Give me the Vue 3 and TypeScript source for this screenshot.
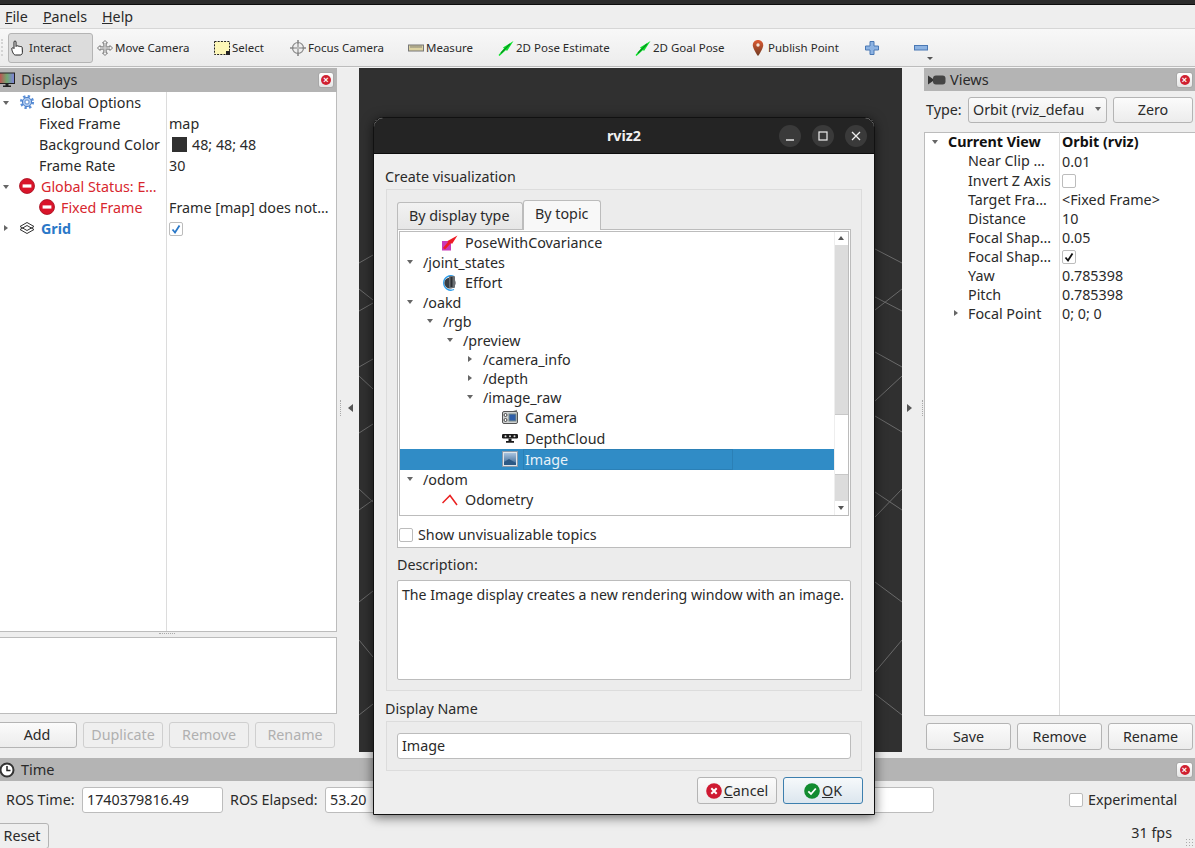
<script setup lang="ts">
interface Tool { label: string; icon: string; width: number; active?: boolean }
interface DRow { name: string; value?: string; pad: number; arrow?: 'down' | 'right'; icon?: string; cls?: string; swatch?: boolean; check?: boolean }
interface VRow { name: string; value?: string; pad: number; arrow?: 'down' | 'right'; cls?: string; box?: 'on' | 'off' }
interface TRow { name: string; h: number; arrowX?: number; arrow?: 'down' | 'right'; textX: number; icon?: string; selected?: boolean }

const menus = [
  { key: 'F', rest: 'ile' },
  { key: 'P', rest: 'anels' },
  { key: 'H', rest: 'elp' },
]

const tools: Tool[] = [
  { label: 'Interact', icon: 'hand', width: 85, active: true },
  { label: 'Move Camera', icon: 'move', width: 117 },
  { label: 'Select', icon: 'select', width: 76 },
  { label: 'Focus Camera', icon: 'focus', width: 118 },
  { label: 'Measure', icon: 'ruler', width: 90 },
  { label: '2D Pose Estimate', icon: 'arrow', width: 137 },
  { label: '2D Goal Pose', icon: 'arrow', width: 115 },
  { label: 'Publish Point', icon: 'pin', width: 114 },
  { label: '', icon: 'plus', width: 49 },
  { label: '', icon: 'minus', width: 20 },
]

const displays: DRow[] = [
  { name: 'Global Options', pad: 43, arrow: 'down', icon: 'gear' },
  { name: 'Fixed Frame', value: 'map', pad: 41 },
  { name: 'Background Color', value: '48; 48; 48', pad: 41, swatch: true },
  { name: 'Frame Rate', value: '30', pad: 41 },
  { name: 'Global Status: E…', pad: 43, arrow: 'down', icon: 'error', cls: 'err' },
  { name: 'Fixed Frame', value: 'Frame [map] does not…', pad: 63, icon: 'error', cls: 'err' },
  { name: 'Grid', pad: 43, arrow: 'right', icon: 'grid', cls: 'blue', check: true },
]

const views: VRow[] = [
  { name: 'Current View', value: 'Orbit (rviz)', pad: 23, arrow: 'down', cls: 'bold' },
  { name: 'Near Clip …', value: '0.01', pad: 43 },
  { name: 'Invert Z Axis', pad: 43, box: 'off' },
  { name: 'Target Fra…', value: '<Fixed Frame>', pad: 43 },
  { name: 'Distance', value: '10', pad: 43 },
  { name: 'Focal Shap…', value: '0.05', pad: 43 },
  { name: 'Focal Shap…', pad: 43, box: 'on' },
  { name: 'Yaw', value: '0.785398', pad: 43 },
  { name: 'Pitch', value: '0.785398', pad: 43 },
  { name: 'Focal Point', value: '0; 0; 0', pad: 43, arrow: 'right' },
]

const topics: TRow[] = [
  { name: 'PoseWithCovariance', h: 20, textX: 65, icon: 'pose' },
  { name: '/joint_states', h: 20, textX: 23, arrowX: 7, arrow: 'down' },
  { name: 'Effort', h: 20, textX: 65, icon: 'effort' },
  { name: '/oakd', h: 19, textX: 23, arrowX: 7, arrow: 'down' },
  { name: '/rgb', h: 19, textX: 43, arrowX: 27, arrow: 'down' },
  { name: '/preview', h: 19, textX: 63, arrowX: 47, arrow: 'down' },
  { name: '/camera_info', h: 19, textX: 83, arrowX: 68, arrow: 'right' },
  { name: '/depth', h: 19, textX: 83, arrowX: 68, arrow: 'right' },
  { name: '/image_raw', h: 19, textX: 83, arrowX: 67, arrow: 'down' },
  { name: 'Camera', h: 21, textX: 125, icon: 'camera' },
  { name: 'DepthCloud', h: 21, textX: 125, icon: 'depth' },
  { name: 'Image', h: 21, textX: 125, icon: 'image', selected: true },
  { name: '/odom', h: 20, textX: 23, arrowX: 7, arrow: 'down' },
  { name: 'Odometry', h: 20, textX: 65, icon: 'odom' },
  { name: '/', h: 20, textX: 23, arrowX: 7, arrow: 'down' },
]

const gridLines: number[][] = [
  [359, 263, 373, 255], [359, 289, 373, 300], [359, 311, 373, 303], [359, 367, 373, 359],
  [359, 376, 373, 389], [359, 433, 373, 424], [359, 489, 373, 502], [359, 510, 373, 500],
  [359, 602, 373, 591], [359, 640, 373, 657], [359, 715, 373, 704],
  [875, 249, 902, 263], [875, 310, 902, 289], [875, 297, 902, 311], [875, 352, 902, 367],
  [875, 401, 902, 376], [875, 416, 902, 432], [875, 492, 902, 510], [875, 517, 902, 489],
  [875, 582, 902, 602], [875, 672, 902, 640], [875, 694, 902, 715],
].map(([a, b, c, d]) => [a - 359, b - 68, c - 359, d - 68])
</script>

<template>
  <div class="app">
    <svg class="sprite" width="0" height="0" aria-hidden="true">
      <defs>
        <linearGradient id="screen" x1="0" x2="1" y1="0" y2="0">
          <stop offset="0" stop-color="#c05050" /><stop offset=".5" stop-color="#70a870" /><stop offset="1" stop-color="#8080e0" />
        </linearGradient>
        <linearGradient id="pinG" x1="0" x2="0" y1="0" y2="1">
          <stop offset="0" stop-color="#dd5a32" /><stop offset="1" stop-color="#6e3a22" />
        </linearGradient>
        <linearGradient id="imgG" x1="0" x2="0" y1="0" y2="1">
          <stop offset="0" stop-color="#a8c4e0" /><stop offset="1" stop-color="#33618f" />
        </linearGradient>
      </defs>
      <symbol id="hand" viewBox="0 0 16 16">
        <path d="M.8 8.500C.8 7.600 2.600 7.600 3 8.500V2c0-1.400 2-1.400 2 0v4.500l.3-.4c.5-.7 1.700-.5 1.800.3.4-.6 1.600-.5 1.800.4.5-.5 2.300-.3 2.300.7l.2 4.800c0 1.700-1 2.700-2.200 2.700H4.500C2.800 15.500.8 11 .8 8.500Z" fill="#fff" stroke="#222" stroke-width="1" />
      </symbol>
      <symbol id="move" viewBox="0 0 16 16">
        <path d="M8 .5 10.500 3H9.200v3.800H13V5.500L15.500 8 13 10.500V9.200H9.200V13h1.300L8 15.500 5.500 13h1.300V9.200H3v1.300L.5 8 3 5.500v1.300h3.800V3H5.500Z" fill="#f4f4f4" stroke="#777" stroke-width="1" />
        <path d="M6 6h4v4H6Z M8 3v10M3 8h10" fill="none" stroke="#aaa" stroke-width=".7" />
      </symbol>
      <symbol id="select" viewBox="0 0 16 16">
        <rect x=".5" y="1.500" width="15" height="13" fill="#fdf7b8" stroke="#222" stroke-dasharray="2 1.200" />
        <path d="M12 11h4v4h-4Z" fill="#222" />
      </symbol>
      <symbol id="focus" viewBox="0 0 16 16">
        <circle cx="8" cy="8" r="5.500" fill="#eee" stroke="#888" stroke-width="1.200" />
        <path d="M8 0v16M0 8h16" stroke="#888" stroke-width="1.600" />
        <path d="M8 4v8M4 8h8" stroke="#ddd" stroke-width=".7" />
      </symbol>
      <symbol id="ruler" viewBox="0 0 16 16">
        <rect x=".5" y="5" width="15" height="6" fill="#dcd2a2" stroke="#777" />
        <path d="M3 5.500v2.400M5 5.500v2.400M7 5.500v2.400M9 5.500v2.400M11 5.500v2.400M13 5.500v2.400" stroke="#666" stroke-width=".8" />
      </symbol>
      <symbol id="arrow" viewBox="0 0 16 16">
        <path d="M.5 15 6 8.500 5 7.500 15.500 1 9 11 8 10 1.500 16Z" fill="#0be32a" />
        <path d="M3 13 12 4" stroke="#0a8a20" stroke-width="1.200" />
      </symbol>
      <symbol id="pin" viewBox="0 0 16 16">
        <path d="M8 0C5 0 2.800 2.200 2.800 5.200 2.800 9 8 16 8 16s5.200-7 5.200-10.800C13.200 2.200 11 0 8 0Z" fill="url(#pinG)" />
        <circle cx="8" cy="5" r="1.700" fill="#f4e4d8" />
      </symbol>
      <symbol id="plus" viewBox="0 0 16 16">
        <path d="M6 1.500h4V6h4.500v4H10v4.500H6V10H1.500V6H6Z" fill="#8db3e2" stroke="#4a78b4" />
      </symbol>
      <symbol id="minus" viewBox="0 0 16 16">
        <rect x="1.500" y="5.500" width="13" height="4.500" fill="#8db3e2" stroke="#4a78b4" />
      </symbol>
      <symbol id="monitor" viewBox="0 0 16 16">
        <rect x=".5" y="1" width="15" height="10.500" fill="url(#screen)" stroke="#222" />
        <path d="M6.500 12h3v1.500h2.500V15H4v-1.500h2.500Z" fill="#222" />
      </symbol>
      <symbol id="gear" viewBox="0 0 16 16">
        <circle cx="8" cy="8" r="5.600" fill="none" stroke="#5a8fd8" stroke-width="3" stroke-dasharray="2.200 2.200" />
        <circle cx="8" cy="8" r="4.600" fill="#a9c6ee" stroke="#4d80c8" stroke-width="1" />
        <circle cx="8" cy="8" r="2" fill="#fff" stroke="#4d80c8" stroke-width=".8" />
      </symbol>
      <symbol id="error" viewBox="0 0 16 16">
        <circle cx="8" cy="8" r="7.500" fill="#d9142a" stroke="#a50d1d" stroke-width=".8" />
        <rect x="3.600" y="6.400" width="8.800" height="3.200" fill="#fff" />
      </symbol>
      <symbol id="grid" viewBox="0 0 16 16">
        <path d="M8 2.500 15 6.500 8 10.500 1 6.500Z M8 5.500 15 9.500 8 13.500 1 9.500Z" fill="none" stroke="#333" stroke-width="1" />
      </symbol>
      <symbol id="viewcam" viewBox="0 0 18 12">
        <path d="M0 1.500 5 5V7L0 10.500Z" fill="#333" />
        <rect x="5" y="1.500" width="12.500" height="9" rx="3" fill="#444" />
      </symbol>
      <symbol id="clock" viewBox="0 0 16 16">
        <circle cx="8" cy="8" r="6.500" fill="#fff" stroke="#333" stroke-width="2" />
        <path d="M8 4v4.500h3.500" fill="none" stroke="#222" stroke-width="1.500" />
      </symbol>
      <symbol id="pose" viewBox="0 0 16 16">
        <rect x="0" y="6" width="9" height="9.500" fill="#c93ab8" />
        <path d="M1 13 6 7 5.500 6 15.500 .5 10 9 9 8 3 14.500Z" fill="#ee1c25" />
      </symbol>
      <symbol id="effort" viewBox="0 0 16 16">
        <path d="M12 14.500A7.200 7.200 0 1 1 12 1.500" fill="none" stroke="#2a9bea" stroke-width="1.300" />
        <circle cx="8" cy="8" r="5.600" fill="#3a3f44" />
        <rect x="7" y="1" width="6" height="12" rx="1" fill="#6a6e72" />
        <rect x="8.500" y="2" width="2" height="10" fill="#2d3034" />
      </symbol>
      <symbol id="camera" viewBox="0 0 16 16">
        <path d="M11 2 15 .8V3Z" fill="#888" />
        <rect x=".5" y="2.500" width="15" height="12" rx="1.500" fill="#cfd2d2" stroke="#555" />
        <circle cx="3.500" cy="6" r="1.500" fill="#fff" stroke="#444" />
        <circle cx="3.500" cy="11" r="1.500" fill="#fff" stroke="#444" />
        <rect x="7" y="5" width="7" height="7" fill="#2f5ea8" stroke="#788" />
      </symbol>
      <symbol id="depth" viewBox="0 0 16 16">
        <rect x="0" y="4" width="16" height="4.500" rx="1.200" fill="#1a1a1a" />
        <circle cx="3.500" cy="6.200" r="1" fill="#ddd" /><circle cx="8" cy="6.200" r="1" fill="#ddd" /><circle cx="12.500" cy="6.200" r="1" fill="#ddd" />
        <path d="M6.500 8.500h3v2.500h2.500v1.800H4V11h2.500Z" fill="#1a1a1a" />
      </symbol>
      <symbol id="image" viewBox="0 0 16 16">
        <rect x=".5" y=".5" width="15" height="15" fill="#dfe6ea" stroke="#89a" />
        <rect x="2" y="2" width="12" height="12" fill="url(#imgG)" />
        <path d="M2 11 7 8l7 4v2H2Z" fill="#2c5a86" />
      </symbol>
      <symbol id="odom" viewBox="0 0 16 16">
        <path d="M.5 11 8 3.500 15 13" fill="none" stroke="#ea2020" stroke-width="1.500" />
      </symbol>
      <symbol id="cancel" viewBox="0 0 16 16">
        <circle cx="8" cy="8" r="7.800" fill="#cf1a32" />
        <path d="M5.300 5.300 10.700 10.700M10.700 5.300 5.300 10.700" stroke="#fff" stroke-width="2" />
      </symbol>
      <symbol id="ok" viewBox="0 0 16 16">
        <circle cx="8" cy="8" r="7.800" fill="#128c30" />
        <path d="M4.300 8.300 7 11l4.800-5.500" fill="none" stroke="#fff" stroke-width="1.800" />
      </symbol>
      <symbol id="tick" viewBox="0 0 12 12">
        <path d="M2.500 6.500 5 9.500 9.500 2.500" fill="none" stroke="currentColor" stroke-width="1.800" />
      </symbol>
    </svg>

    <div class="topbar"></div>

    <nav class="menu">
      <span v-for="m in menus" :key="m.key" class="menu-item"><u>{{ m.key }}</u>{{ m.rest }}</span>
    </nav>

    <div class="toolbar">
      <div class="grip"></div>
      <div
        v-for="t in tools"
        :key="t.label + t.icon"
        class="tool"
        :class="{ active: t.active }"
        :style="{ width: t.width + 'px' }"
      >
        <svg class="ti"><use :href="'#' + t.icon" /></svg>
        <span v-if="t.label">{{ t.label }}</span>
      </div>
      <span class="more"></span>
    </div>

    <main class="main">
      <section class="lpanel">
        <header class="dock">
          <svg class="dock-ic mon"><use href="#monitor" /></svg>
          <span>Displays</span>
          <span class="close"><i>×</i></span>
        </header>
        <div class="tree dtree">
          <div v-for="(r, i) in displays" :key="i" class="drow" :class="r.cls">
            <div class="dname" :style="{ paddingLeft: r.pad + 'px' }">
              <span v-if="r.arrow" class="arr" :class="r.arrow"></span>
              <svg v-if="r.icon" class="dic" :style="{ left: (r.pad - 22) + 'px' }"><use :href="'#' + r.icon" /></svg>
              {{ r.name }}
            </div>
            <div class="dval">
              <span v-if="r.swatch" class="swatch"></span>
              <span v-if="r.check" class="cb blue-check"><svg class="tick"><use href="#tick" /></svg></span>
              {{ r.value }}
            </div>
          </div>
          <div class="dfill"><div class="dname"></div></div>
        </div>
        <div class="hsplit"><span class="hdots"></span></div>
        <div class="tree lower"></div>
        <div class="btns">
          <button class="btn add">Add</button>
          <button class="btn dis">Duplicate</button>
          <button class="btn dis">Remove</button>
          <button class="btn dis">Rename</button>
        </div>
      </section>

      <div class="split sl"><span class="vdots vd-l"></span><span class="arr left-arr"></span></div>

      <div class="viewport">
        <svg class="grid" width="543" height="684">
          <line v-for="(l, i) in gridLines" :key="i" :x1="l[0]" :y1="l[1]" :x2="l[2]" :y2="l[3]" stroke="#6a6a6a" stroke-width="1" />
        </svg>
      </div>

      <div class="split sr"><span class="arr right-arr"></span><span class="vdots vd-r"></span></div>

      <section class="rpanel">
        <header class="dock vdock">
          <svg class="dock-ic vc"><use href="#viewcam" /></svg>
          <span>Views</span>
          <span class="close"><i>×</i></span>
        </header>
        <div class="type-row">
          <span class="type-l">Type:</span>
          <div class="combo"><span class="combo-t">Orbit (rviz_defau</span><span class="arr down combo-a"></span></div>
          <button class="btn zero">Zero</button>
        </div>
        <div class="tree vtree">
          <div v-for="(r, i) in views" :key="i" class="vrow" :class="r.cls">
            <div class="vname" :style="{ paddingLeft: r.pad + 'px' }">
              <span v-if="r.arrow" class="arr" :class="r.arrow"></span>
              {{ r.name }}
            </div>
            <div class="vval">
              <span v-if="r.box" class="cb"><svg v-if="r.box === 'on'" class="tick"><use href="#tick" /></svg></span>
              {{ r.value }}
            </div>
          </div>
          <div class="vfill"><div class="vname"></div></div>
        </div>
        <div class="vbtns">
          <button class="btn vb">Save</button>
          <button class="btn vb">Remove</button>
          <button class="btn vb">Rename</button>
        </div>
      </section>
    </main>

    <section class="time">
      <header class="dock tdock">
        <svg class="dock-ic clk"><use href="#clock" /></svg>
        <span>Time</span>
        <span class="close"><i>×</i></span>
      </header>
      <div class="time-row">
        <span class="tl1">ROS Time:</span>
        <div class="field t1">1740379816.49</div>
        <span class="tl2">ROS Elapsed:</span>
        <div class="field t2">53.20</div>
        <span class="cb exp"></span>
        <span class="exp-t">Experimental</span>
      </div>
      <div class="time-bottom">
        <button class="btn reset">Reset</button>
        <span class="fps">31 fps</span>
      </div>
      <span class="size-grip"></span>
    </section>

    <div class="dialog">
      <header class="dlg-title">
        <span>rviz2</span>
        <div class="wm">
          <span class="wm-b"><svg width="10" height="10"><path d="M1 9h8" stroke="#eee" stroke-width="1.400" /></svg></span>
          <span class="wm-b"><svg width="10" height="10"><rect x="1" y="1" width="8" height="8" fill="none" stroke="#eee" stroke-width="1.200" /></svg></span>
          <span class="wm-b"><svg width="10" height="10"><path d="M1 1l8 8M9 1l-8 8" stroke="#eee" stroke-width="1.300" /></svg></span>
        </div>
      </header>
      <div class="dlg-body">
        <div class="lbl l1">Create visualization</div>
        <div class="group g1">
          <div class="tabs">
            <span class="tab">By display type</span>
            <span class="tab on">By topic</span>
          </div>
          <div class="tabpane">
            <div class="tt">
              <div class="tt-list">
                <div
                  v-for="(r, i) in topics"
                  :key="i"
                  class="tt-row"
                  :class="{ sel: r.selected }"
                  :style="{ height: r.h + 'px', paddingLeft: r.textX + 'px' }"
                >
                  <span v-if="r.arrow" class="arr" :class="r.arrow" :style="{ left: r.arrowX + 'px' }"></span>
                  <svg v-if="r.icon" class="tt-ic" :style="{ left: (r.textX - 23) + 'px' }"><use :href="'#' + r.icon" /></svg>
                  <span v-if="r.selected" class="focus-rect"></span>
                  <span class="tt-text">{{ r.name }}</span>
                </div>
              </div>
              <div class="sb">
                <div class="sb-btn"><span class="arr up"></span></div>
                <div class="sb-gr a"></div>
                <div class="sb-h"></div>
                <div class="sb-gr b"></div>
                <div class="sb-btn"><span class="arr down sb-d"></span></div>
              </div>
            </div>
            <div class="show">
              <span class="cb"></span>
              <span>Show unvisualizable topics</span>
            </div>
          </div>
          <div class="lbl l2">Description:</div>
          <div class="desc">The Image display creates a new rendering window with an image.</div>
        </div>
        <div class="lbl l3">Display Name</div>
        <div class="group g2">
          <div class="field name">Image</div>
        </div>
        <div class="dlg-btns">
          <button class="btn d-b"><svg class="bi"><use href="#cancel" /></svg><span><u>C</u>ancel</span></button>
          <button class="btn d-b ok"><svg class="bi"><use href="#ok" /></svg><span><u>O</u>K</span></button>
        </div>
      </div>
    </div>
  </div>
</template>

<style>
html, body { margin: 0; padding: 0; background: #eeeeee; }
</style>

<style scoped>
.app {
  position: relative;
  width: 1195px;
  height: 848px;
  overflow: hidden;
  display: flex;
  flex-direction: column;
  background: #eeeeee;
  color: #2a2a2a;
  font: 14.3px/20px "Noto Sans", "Open Sans", sans-serif;
}
.sprite { position: absolute; }
.topbar { height: 4px; background: #2c2c2c; border-bottom: 1px solid #0c0c0c; flex: none; }
.menu { height: 23px; flex: none; display: flex; align-items: center; padding-left: 5px; gap: 15px; border-bottom: 1px solid #d6d6d6; }
.menu-item { line-height: 22px; }

.toolbar {
  height: 37px;
  flex: none;
  display: flex;
  align-items: center;
  padding-left: 8px;
  position: relative;
  background: linear-gradient(#f8f8f8, #ececec);
  border-bottom: 1px solid #bcbcbc;
  box-shadow: 0 1px 0 #f4f4f4;
  font-size: 11.5px;
}
.grip { position: absolute; left: 1px; top: 10px; height: 17px; width: 2px; border-left: 2px dotted #d4d4d4; }
.tool { flex: none; box-sizing: border-box; height: 30px; display: flex; align-items: center; gap: 2px; padding-left: 3px; border: 1px solid transparent; white-space: nowrap; }
.tool.active { background: #dcdcdc; border-color: #b4b4b4; border-radius: 3px; padding-left: 2px; }
.ti { width: 16px; height: 16px; flex: none; }
.more { position: absolute; left: 927px; top: 28px; border: 3px solid transparent; border-top: 3px solid #555; border-bottom: 0; }

.main { flex: none; height: 690px; margin-top: 1px; display: flex; align-items: flex-start; }
.lpanel { width: 340px; margin-left: -3px; height: 680px; display: flex; flex-direction: column; flex: none; }
.dock { height: 24px; flex: none; background: #b4b4b4; display: flex; align-items: center; position: relative; box-sizing: border-box; padding: 0 0 2px 24px; font-size: 14.5px; }
.dock-ic { position: absolute; }
.mon { left: 2px; top: 4px; width: 16px; height: 16px; }
.vc { left: 4px; top: 6px; width: 18px; height: 12px; }
.clk { left: 2px; top: 4px; width: 16px; height: 16px; }
.close { position: absolute; right: 3px; top: 4px; width: 16px; height: 16px; box-sizing: border-box; background: linear-gradient(#fff, #e4e4e4); border: 1px solid #a8a8a8; border-radius: 3px; display: flex; align-items: center; justify-content: center; }
.close i { width: 10px; height: 10px; border-radius: 50%; background: #d02030; color: #fff; font: 700 9px/10px "Liberation Sans", sans-serif; text-align: center; }

.tree { background: #fff; border: 1px solid #bcbcbc; box-sizing: border-box; }
.dtree { flex: 1; display: flex; flex-direction: column; border-top: 0; }
.drow { height: 21px; display: flex; flex: none; }
.dname { width: 169px; flex: none; box-sizing: border-box; position: relative; border-right: 1px solid #dcdcdc; line-height: 21px; white-space: nowrap; overflow: hidden; }
.dval { padding-left: 2px; display: flex; align-items: center; gap: 3px; white-space: nowrap; line-height: 21px; }
.dfill { flex: 1; display: flex; }
.dic { position: absolute; top: 2px; width: 16px; height: 16px; }
.err .dname { color: #d8262e; }
.blue .dname { color: #2a78c8; font-weight: 700; }
.swatch { width: 15px; height: 15px; background: #303030; margin: 0 2px 0 3px; }
.arr { position: absolute; width: 0; height: 0; border-style: solid; border-color: transparent; }
.arr.down { border-width: 4px 3.5px 0; border-top-color: #666; top: 9px; }
.arr.right { border-width: 3.5px 0 3.5px 4px; border-left-color: #666; top: 7px; }
.drow .arr.down { left: 5px; }
.drow .arr.right { left: 6px; }
.tt-row .arr.down { top: calc(50% - 3px); }
.tt-row .arr.right { top: calc(50% - 4px); }

.cb { width: 14px; height: 14px; flex: none; box-sizing: border-box; background: #fff; border: 1px solid #bcbcbc; border-radius: 2px; display: inline-flex; align-items: center; justify-content: center; color: #111; }
.blue-check { color: #2a78c8; }
.tick { width: 12px; height: 12px; display: block; }

.hsplit { height: 5px; flex: none; position: relative; }
.hdots { position: absolute; left: 162px; top: 1px; width: 16px; border-top: 1px dotted #aaa; }
.vdots { position: absolute; top: 332px; height: 16px; border-left: 1px dotted #aaa; }
.vd-l { left: 3px; }
.vd-r { left: 20px; }
.lower { height: 77px; flex: none; }
.btns { display: flex; gap: 6px; margin-top: 8px; flex: none; }
.btn { flex: none; box-sizing: border-box; height: 26px; width: 80px; padding: 0; background: linear-gradient(#fbfbfb, #ececec); border: 1px solid #b4b4b4; border-radius: 3px; font: inherit; color: #2a2a2a; line-height: 20px; }
.btn.dis { color: #b0b0b0; border-color: #cfcfcf; background: #efefef; }

.split { flex: none; height: 684px; position: relative; }
.sl { width: 22px; }
.sr { width: 22px; }
.left-arr { left: 11px; top: 336px; border-width: 4px 5px 4px 0; border-right-color: #555; }
.right-arr { left: 5px; top: 336px; border-width: 4px 0 4px 5px; border-left-color: #555; }
.viewport { width: 543px; height: 684px; flex: none; background: #303030; position: relative; }
.grid { display: block; }

.rpanel { width: 271px; flex: none; height: 690px; display: flex; flex-direction: column; }
.vdock { height: 23px; padding-left: 26px; }
.vdock .close { right: 2px; top: 4px; width: 17px; height: 16px; }
.type-row { height: 26px; margin-top: 6px; display: flex; align-items: center; padding-left: 2px; gap: 6px; flex: none; }
.type-l { width: 36px; flex: none; }
.combo { width: 139px; height: 26px; box-sizing: border-box; background: linear-gradient(#fbfbfb, #ececec); border: 1px solid #b4b4b4; border-radius: 3px; position: relative; padding-left: 4px; line-height: 24px; overflow: hidden; white-space: nowrap; }
.combo-t { display: block; width: 112px; overflow: hidden; }
.combo-a { right: 5px; top: 11px; }
.zero { width: 80px; }
.vtree { margin-top: 9px; height: 584px; flex: none; display: flex; flex-direction: column; border-right: 0; }
.vrow { height: 19px; display: flex; flex: none; line-height: 19px; }
.vrow:first-child { margin-top: -1px; }
.vrow:nth-child(2) { height: 20px; }
.vname { width: 135px; flex: none; box-sizing: border-box; position: relative; border-right: 1px solid #dcdcdc; white-space: nowrap; overflow: hidden; }
.vval { padding-left: 2px; display: flex; align-items: center; white-space: nowrap; }
.vfill { flex: 1; display: flex; }
.vrow .arr.down { left: 7px; top: 8px; }
.vrow .arr.right { left: 29px; top: 6px; }
.bold { font-weight: 700; color: #111; }
.vbtns { display: flex; gap: 6px; margin: 7px 0 0 2px; flex: none; }
.vb { width: 85px; height: 27px; }

.time { flex: none; height: 90px; display: flex; flex-direction: column; position: relative; }
.tdock { height: 23px; margin-left: -3px; }
.tdock .close { right: 2px; top: 4px; width: 17px; height: 16px; }
.time-row { height: 26px; margin-top: 6px; display: flex; align-items: center; padding-left: 6px; flex: none; position: relative; }
.tl1 { width: 69px; flex: none; white-space: nowrap; }
.tl2 { width: 88px; flex: none; white-space: nowrap; }
.field { box-sizing: border-box; height: 26px; background: #fff; border: 1px solid #bcbcbc; border-radius: 3px; padding-left: 4px; line-height: 24px; }
.t1 { width: 141px; margin: 0 7px; flex: none; }
.t2 { width: 609px; margin-left: 7px; flex: none; }
.exp { margin-left: 135px; }
.exp-t { margin-left: 5px; }
.time-bottom { display: flex; align-items: flex-start; justify-content: space-between; margin-top: 10px; flex: none; position: relative; }
.reset { width: 54px; margin-left: -5px; height: 26px; border-radius: 3px; background: #efefef; }
.fps { margin: 0 23px 0 0; }
.size-grip { position: absolute; right: 2px; bottom: 2px; width: 8px; height: 8px; background: radial-gradient(circle, #aaa 0.7px, transparent 1px) 0 0 / 3px 3px; }

.dialog {
  position: absolute;
  left: 373px;
  top: 117px;
  width: 502px;
  height: 698px;
  box-sizing: border-box;
  border: 1px solid #111;
  border-radius: 10px 10px 0 0;
  display: flex;
  flex-direction: column;
  background: #eeeeee;
  box-shadow: 0 2px 12px rgba(0, 0, 0, .6);
}
.dlg-title { height: 36px; flex: none; background: #242424; border-bottom: 1px solid #0c0c0c; box-sizing: border-box; border-radius: 9px 9px 0 0; color: #f0f0f0; font-weight: 700; display: flex; align-items: center; justify-content: center; position: relative; }
.wm { position: absolute; right: 7px; top: 7px; display: flex; gap: 11px; }
.wm-b { width: 22px; height: 22px; border-radius: 50%; background: #3a3a3a; display: flex; align-items: center; justify-content: center; }
.dlg-body { flex: 1; padding: 0 12px; display: flex; flex-direction: column; }
.lbl { flex: none; height: 20px; }
.l1 { margin-top: 13px; margin-left: -1px; }
.group { border: 1px solid #dcdcdc; box-sizing: border-box; flex: none; background: #ececec; }
.g1 { margin-top: 2px; height: 502px; padding: 10px 10px 0; }
.tabs { display: flex; height: 29px; position: relative; align-items: flex-end; }
.tab { box-sizing: border-box; height: 27px; width: 126px; padding-left: 11px; background: linear-gradient(#f2f2f2, #e6e6e6); border: 1px solid #bcbcbc; border-bottom: 0; border-radius: 3px 3px 0 0; line-height: 26px; }
.tab.on { height: 30px; width: 78px; background: #f8f8f8; margin-bottom: -1px; position: relative; z-index: 1; line-height: 26px; }
.tabpane { box-sizing: border-box; height: 319px; background: #fff; border: 1px solid #bcbcbc; padding: 1px; }
.tt { display: flex; height: 285px; border: 1px solid #bcbcbc; box-sizing: border-box; overflow: hidden; }
.tt-list { width: 434px; flex: none; overflow: hidden; padding-top: 1px; }
.tt-row { position: relative; box-sizing: border-box; display: flex; align-items: center; white-space: nowrap; }
.tt-row.sel { background: #308cc6; color: #e8f2f8; }
.tt-ic { position: absolute; top: 2px; width: 16px; height: 16px; }
.focus-rect { position: absolute; left: 123px; top: 0; bottom: 0; width: 210px; border: 1px solid #2b80b6; box-sizing: border-box; }
.tt-text { position: relative; }
.sb { width: 15px; flex: none; display: flex; flex-direction: column; background: #fff; border-left: 1px solid #eee; box-sizing: border-box; }
.sb-btn { height: 13px; flex: none; position: relative; }
.arr.up { border-width: 0 3.5px 4px; border-bottom-color: #555; left: 3px; top: 4px; }
.arr.sb-d { left: 3px; top: 5px; border-top-color: #555; }
.sb-gr { background: #dcdcdc; flex: none; }
.sb-gr.a { height: 169px; }
.sb-h { height: 61px; flex: none; background: #fff; border-top: 1px solid #c8c8c8; border-bottom: 1px solid #c8c8c8; box-sizing: border-box; }
.sb-gr.b { height: 26px; }
.show { display: flex; align-items: center; height: 30px; gap: 5px; padding: 3px 0 0; margin-top: 2px; box-sizing: border-box; }
.l2 { margin: 7px 0 5px; line-height: 20px; }
.desc { box-sizing: border-box; height: 100px; background: #fff; border: 1px solid #bcbcbc; border-radius: 2px; padding: 4px 4px; font-size: 14.15px; white-space: nowrap; overflow: hidden; }
.l3 { margin-top: 8px; margin-left: -1px; }
.g2 { margin-top: 2px; height: 50px; padding: 11px 10px; }
.name { width: 454px; }
.dlg-btns { display: flex; justify-content: flex-end; gap: 6px; margin: 6px -1px 0 0; flex: none; }
.d-b { width: 80px; height: 27px; display: flex; align-items: center; justify-content: center; gap: 2px; }
.ok { border-color: #3d7fae; background: linear-gradient(#f6f9fb, #dce6ee); }
.bi { width: 16px; height: 16px; flex: none; }
</style>
